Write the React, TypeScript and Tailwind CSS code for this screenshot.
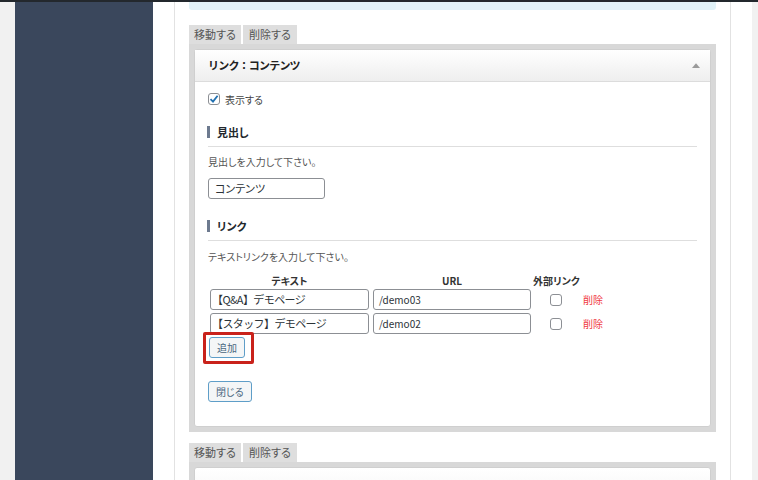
const jp = "font-['Noto_Sans_CJK_JP','Noto_Sans',sans-serif] [font-feature-settings:'palt']";

function Tabs() {
  return (
    <div className="flex gap-[2px] h-[19px] items-end">
      <div className="w-[52px] h-[19px] bg-[#dedede] text-[11px] leading-[19px] text-[#555] text-center">移動する</div>
      <div className="w-[54px] h-[19px] bg-[#dedede] text-[11px] leading-[19px] text-[#555] text-center">削除する</div>
    </div>
  );
}

function SectionHeading({ label }: { label: string }) {
  return (
    <div className="flex items-center h-[16px] border-b border-[#dedede] box-content pb-[6px]">
      <span className="w-[3px] h-[12px] bg-[#6d7a8f] ml-[-1px]" />
      <span className="ml-[7px] text-[11px] font-bold text-[#23282d] leading-[16px]">{label}</span>
    </div>
  );
}

function Checkbox({ checked = false }: { checked?: boolean }) {
  return (
    <span className="w-[12px] h-[12px] rounded-[3px] border border-[#8c8f94] bg-white flex items-center justify-center">
      {checked && (
        <svg width="10" height="10" viewBox="0 0 10 10">
          <path d="M1.5 5.2 L4 7.6 L8.6 1.8" fill="none" stroke="#2271b1" strokeWidth="1.8" />
        </svg>
      )}
    </span>
  );
}

function LinkRow({ text, url }: { text: string; url: string }) {
  return (
    <div className="flex items-center h-[21px]">
      <div className="w-[163px] px-[2px]">
        <div className="h-[21px] border border-[#8c8f94] rounded-[3px] pl-[1px] text-[11px] tracking-[-0.6px] leading-[19px] text-[#2c3338] [font-feature-settings:normal]">
          {text}
        </div>
      </div>
      <div className="w-[162px] px-[2px]">
        <div className="h-[21px] border border-[#8c8f94] rounded-[3px] pl-[5px] text-[10px] leading-[19px] text-[#2c3338]">{url}</div>
      </div>
      <div className="w-[46px] flex justify-center">
        <Checkbox />
      </div>
      <div className="pl-[4px] text-[10px] text-[#f0383f]">削除</div>
    </div>
  );
}

function Button({ label }: { label: string }) {
  return (
    <div className="h-[21px] px-[7px] border border-[#5f9ec8] rounded-[3px] bg-[#f4f6f7] text-[10px] leading-[19px] text-[#4a6780]">
      {label}
    </div>
  );
}

export default function App() {
  return (
    <div className={`w-[758px] h-[480px] overflow-hidden bg-[#f1f1f1] flex flex-col ${jp}`}>
      <div className="h-[2px] bg-[#23282d] shrink-0" />
      <div className="flex flex-1 pl-[15px] pr-[6px] min-h-0">
        <div className="w-[138px] bg-[#3a475c]" />
        <div className="flex-1 bg-white px-[21px]">
          <div className="h-full border-x border-[#e2e2e2] px-[14px]">
            <div className="h-[8px] bg-[#e1f2f8] rounded-b-[3px]" />
            <div className="mt-[15px]">
              <Tabs />
              <div className="bg-[#d8d8d8] p-[5px]">
                <div className="bg-white rounded-[3px] border border-[#cfcfcf]">
                  <div className="h-[32px] flex items-center justify-between pl-[13px] pr-[10px] bg-gradient-to-b from-white to-[#eeeeee] border-b border-[#dcdcdc]">
                    <span className="text-[11px] font-bold text-[#222] tracking-[-0.8px] [font-feature-settings:normal]">リンク：コンテンツ</span>
                    <svg width="8" height="5" viewBox="0 0 8 5">
                      <path d="M0 5 L4 0.3 L8 5 Z" fill="#9a9a9a" />
                    </svg>
                  </div>
                  <div className="pl-[13px] pr-[13px] pt-[11px] pb-[24px]">
                    <div className="flex items-center h-[12px]">
                      <Checkbox checked />
                      <span className="ml-[5px] text-[10px] text-[#444]">表示する</span>
                    </div>
                    <div className="mt-[19px]">
                      <SectionHeading label="見出し" />
                    </div>
                    <div className="mt-[7px] text-[10px] leading-[16px] text-[#555]">見出しを入力して下さい。</div>
                    <div className="mt-[8px] w-[117px] h-[21px] border border-[#8c8f94] rounded-[3px] pl-[6px] text-[11px] leading-[19px] text-[#2c3338]">
                      コンテンツ
                    </div>
                    <div className="mt-[19px]">
                      <SectionHeading label="リンク" />
                    </div>
                    <div className="mt-[8px] text-[10px] leading-[16px] text-[#555]">テキストリンクを入力して下さい。</div>
                    <div className="mt-[8px] flex h-[16px] text-[10px] font-bold text-[#333] leading-[16px]">
                      <div className="w-[163px] text-center">テキスト</div>
                      <div className="w-[162px] text-center">URL</div>
                      <div className="w-[46px] text-center whitespace-nowrap">外部リンク</div>
                    </div>
                    <div className="flex flex-col gap-[3px]">
                      <LinkRow text="【Q&A】デモページ" url="/demo03" />
                      <LinkRow text="【スタッフ】デモページ" url="/demo02" />
                    </div>
                    <div className="mt-[3px] ml-[1px] relative flex">
                      <Button label="追加" />
                      <div className="absolute left-[-6px] top-[-5px] w-[51px] h-[32px] border-[3px] border-[#c9221b] rounded-[2px]" />
                    </div>
                    <div className="mt-[23px] flex">
                      <Button label="閉じる" />
                    </div>
                  </div>
                </div>
              </div>
            </div>
            <div className="mt-[11px]">
              <Tabs />
              <div className="bg-[#d8d8d8] p-[5px] h-[40px]">
                <div className="bg-white rounded-[3px] border border-[#cfcfcf] h-[40px] bg-gradient-to-b from-white to-[#f4f4f4]" />
              </div>
            </div>
          </div>
        </div>
      </div>
    </div>
  );
}
